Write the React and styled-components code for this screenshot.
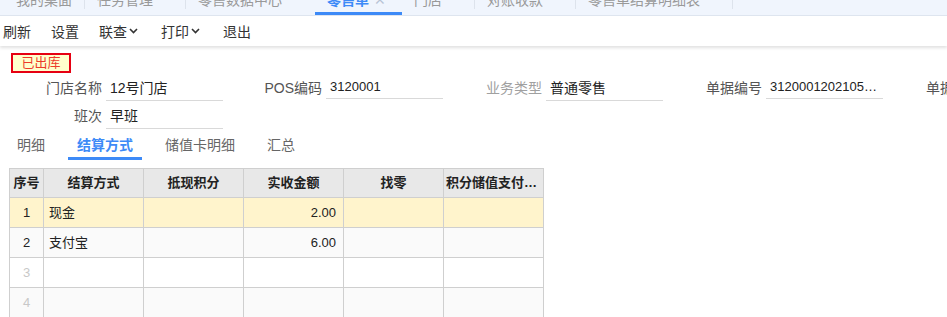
import React from 'react';
import styled, { createGlobalStyle } from 'styled-components';

const GlobalStyle = createGlobalStyle`
  html, body {
    margin: 0;
    padding: 0;
    background: #fff;
  }
  body {
    font-family: "Liberation Sans", "Noto Sans CJK SC", sans-serif;
    color: #333;
  }
`;

const Page = styled.div`
  width: 947px;
  height: 317px;
  overflow: hidden;
  background: #fff;
`;

const TabBar = styled.div`
  height: 15px;
  display: flex;
  align-items: flex-end;
  overflow: hidden;
  background: #f0f5fd;
  border-bottom: 1px solid #dfe6f0;
`;

const Tab = styled.div`
  position: relative;
  flex: none;
  height: 30px;
  line-height: 30px;
  display: flex;
  align-items: center;
  padding: ${p => (p.$home ? '0 13px 0 16px' : '0 11px 0 12px')};
  font-size: 14px;
  color: ${p => (p.$active ? '#3d8af7' : '#999')};
  font-weight: ${p => (p.$active ? 600 : 400)};
  box-shadow: ${p => (p.$active ? 'inset 0 -3px 0 #3d8af7' : 'none')};
  white-space: nowrap;
  &::after {
    content: '';
    display: ${p => (p.$active || p.$beforeActive ? 'none' : 'block')};
    position: absolute;
    right: 0;
    top: 6px;
    width: 1px;
    height: 18px;
    background: #dde3ec;
  }
`;

const CloseSlot = styled.span`
  width: 22px;
  display: flex;
  justify-content: center;
  color: #b8c4d6;
  font-weight: 400;
`;

const Toolbar = styled.div`
  height: 30px;
  display: flex;
  align-items: center;
  padding-left: 3px;
  background: #fff;
  box-shadow: 0 2px 3px rgba(0, 0, 0, 0.12);
  position: relative;
`;

const ToolItem = styled.div`
  display: flex;
  align-items: center;
  margin-right: ${p => (p.$menu ? '23px' : '20px')};
  font-size: 14px;
  color: #333;
  cursor: pointer;
`;

const Chevron = styled.svg`
  margin-left: 2px;
  width: 9px;
  height: 6px;
`;

const Content = styled.div`
  padding-top: 7px;
`;

const StatusTag = styled.div`
  margin-left: 11px;
  width: 60px;
  height: 20px;
  box-sizing: border-box;
  border: 2px solid #e60012;
  background: #ffffcc;
  color: #ec3b2a;
  font-size: 13px;
  line-height: 16px;
  text-align: center;
`;

const FormRow = styled.div`
  display: flex;
  height: 28px;
  padding-left: 10px;
  margin-top: ${p => (p.$first ? '2px' : '0')};
`;

const Field = styled.div`
  flex: none;
  width: 220px;
  display: flex;
`;

const Label = styled.div`
  width: 92px;
  height: 26px;
  line-height: 26px;
  text-align: right;
  font-size: 14px;
  color: ${p => (p.$muted ? '#a0a0a0' : '#555')};
  white-space: nowrap;
`;

const Value = styled.div`
  margin-left: 4px;
  width: 113px;
  height: ${p => (p.$short ? '22px' : '25px')};
  margin-top: ${p => (p.$short ? '1px' : '0')};
  line-height: ${p => (p.$short ? '22px' : '26px')};
  border-bottom: 1px solid #d9d9d9;
  padding-left: 4px;
  box-sizing: content-box;
  font-size: ${p => (p.$short ? '13px' : '14px')};
  color: #222;
  white-space: nowrap;
  overflow: hidden;
  text-overflow: ellipsis;
`;

const SubTabs = styled.div`
  display: flex;
  gap: 14px;
  padding-left: 8px;
  margin-top: 3px;
`;

const SubTab = styled.div`
  padding: 0 9px;
  height: 23px;
  line-height: 23px;
  border-bottom: 3px solid ${p => (p.$active ? '#3d8af7' : 'transparent')};
  font-size: 14px;
  font-weight: ${p => (p.$active ? 700 : 400)};
  color: ${p => (p.$active ? '#3d8af7' : '#666')};
`;

const Grid = styled.div`
  margin: 8px 0 0 9px;
  display: grid;
  grid-template-columns: 34px repeat(5, 100px);
  width: 534px;
  border-left: 1px solid #cfcfcf;
  border-top: 1px solid #cfcfcf;
`;

const HeadCell = styled.div`
  height: 28px;
  line-height: 28px;
  background: #e8e8e8;
  border-right: 1px solid #cfcfcf;
  border-bottom: 1px solid #cfcfcf;
  font-size: 13px;
  font-weight: 700;
  color: #222;
  text-align: center;
  padding: 0 2px;
  white-space: nowrap;
  overflow: hidden;
  text-overflow: ellipsis;
`;

const Cell = styled.div`
  height: 29px;
  line-height: 29px;
  background: ${p => p.$bg};
  border-right: 1px solid #cfcfcf;
  border-bottom: 1px solid #cfcfcf;
  font-size: 13px;
  color: ${p => (p.$dim ? '#c8c8c8' : '#222')};
  text-align: ${p => p.$align || 'left'};
  padding: ${p => (p.$align === 'right' ? '0 7px 0 5px' : '0 5px')};
  white-space: nowrap;
  overflow: hidden;
`;

const tabs = [
  { name: '我的桌面', home: true },
  { name: '任务管理' },
  { name: '零售数据中心', beforeActive: true },
  { name: '零售单', active: true },
  { name: '门店' },
  { name: '对账收款' },
  { name: '零售单结算明细表' },
];

const tools = [
  { name: '刷新' },
  { name: '设置' },
  { name: '联查', menu: true },
  { name: '打印', menu: true },
  { name: '退出' },
];

const headers = ['序号', '结算方式', '抵现积分', '实收金额', '找零', '积分储值支付金额'];

const rows = [
  { no: 1, method: '现金', amount: '2.00' },
  { no: 2, method: '支付宝', amount: '6.00' },
  { no: 3 },
  { no: 4 },
];

const rowBg = (i) => {
  if (i === 0) return '#fff4cc';
  return i % 2 === 1 ? '#fafafa' : '#fff';
};

const Down = () => (
  <Chevron viewBox="0 0 9 6">
    <path d="M1 1 L4.5 4.5 L8 1" fill="none" stroke="#333" strokeWidth="1.6" />
  </Chevron>
);

export default function App() {
  return (
    <Page>
      <GlobalStyle />
      <TabBar>
        {tabs.map(t => (
          <Tab key={t.name} $home={t.home} $active={t.active} $beforeActive={t.beforeActive}>
            {t.name}
            {!t.home && <CloseSlot>{t.active ? '✕' : ''}</CloseSlot>}
          </Tab>
        ))}
      </TabBar>

      <Toolbar>
        {tools.map(t => (
          <ToolItem key={t.name} $menu={t.menu}>
            {t.name}
            {t.menu && <Down />}
          </ToolItem>
        ))}
      </Toolbar>

      <Content>
        <StatusTag>已出库</StatusTag>

        <FormRow $first>
          <Field>
            <Label>门店名称</Label>
            <Value>12号门店</Value>
          </Field>
          <Field>
            <Label>POS编码</Label>
            <Value $short>3120001</Value>
          </Field>
          <Field>
            <Label $muted>业务类型</Label>
            <Value>普通零售</Value>
          </Field>
          <Field>
            <Label>单据编号</Label>
            <Value $short>3120001202105010001</Value>
          </Field>
          <Field>
            <Label>单据日期</Label>
            <Value $short>2021-05-01</Value>
          </Field>
        </FormRow>
        <FormRow>
          <Field>
            <Label>班次</Label>
            <Value>早班</Value>
          </Field>
        </FormRow>

        <SubTabs>
          <SubTab>明细</SubTab>
          <SubTab $active>结算方式</SubTab>
          <SubTab>储值卡明细</SubTab>
          <SubTab>汇总</SubTab>
        </SubTabs>

        <Grid>
          {headers.map(h => (
            <HeadCell key={h}>{h}</HeadCell>
          ))}
          {rows.map((r, i) => (
            <React.Fragment key={r.no}>
              <Cell $bg={rowBg(i)} $align="center" $dim={!r.method}>{r.no}</Cell>
              <Cell $bg={rowBg(i)}>{r.method}</Cell>
              <Cell $bg={rowBg(i)} />
              <Cell $bg={rowBg(i)} $align="right">{r.amount}</Cell>
              <Cell $bg={rowBg(i)} />
              <Cell $bg={rowBg(i)} />
            </React.Fragment>
          ))}
        </Grid>
      </Content>
    </Page>
  );
}
